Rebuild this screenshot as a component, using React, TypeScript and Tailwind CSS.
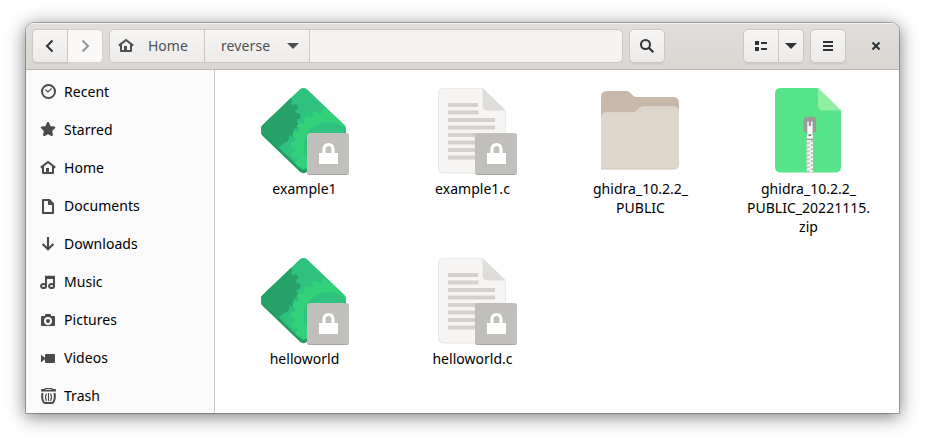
import React from "react";

type P = { children: React.ReactNode; className?: string };

function Sym({ children, className = "" }: P) {
  return (
    <svg width="16" height="16" viewBox="0 0 16 16" className={"shrink-0 " + className} fill="currentColor" stroke="none">
      {children}
    </svg>
  );
}

const homeShape = (
  <>
    <path d="M0.8 7.6 8 2 15.2 7.6" fill="none" stroke="currentColor" strokeWidth="2" />
    <path d="M2 7v6q0 1 1 1h10q1 0 1-1V7l-2-1.5V12H9V8H6v4H4V5.5z" />
  </>
);

const places: { name: string; icon: React.ReactNode }[] = [
  {
    name: "Recent",
    icon: (
      <>
        <circle cx="8.5" cy="7.5" r="6.5" fill="none" stroke="currentColor" strokeWidth="2" />
        <path d="M5.3 5.6 8 8 11.6 4.4" fill="none" stroke="currentColor" strokeWidth="1.2" />
      </>
    ),
  },
  {
    name: "Starred",
    icon: <path d="M8 1 9.9 5l4.400.6-3.200 3 .8 4.400L8 11l-3.900 2 .8-4.400-3.200-3L6.100 5z" stroke="currentColor" strokeWidth="2" strokeLinejoin="round" />,
  },
  { name: "Home", icon: homeShape },
  {
    name: "Documents",
    icon: <path d="M3 2h6.4L13 5.6V15H3zM9 2v4h4" fill="none" stroke="currentColor" strokeWidth="2" strokeLinejoin="round" />,
  },
  {
    name: "Downloads",
    icon: <path d="M8 1v12M2.600 8 8 13.300 13.400 8" fill="none" stroke="currentColor" strokeWidth="2.200" />,
  },
  {
    name: "Music",
    icon: (
      <>
        <path d="M5 1.700h10V12h-2V5H7v7H5z" />
        <ellipse cx="3.600" cy="12" rx="2.500" ry="2.100" fill="none" stroke="currentColor" strokeWidth="2" />
        <ellipse cx="11.600" cy="12" rx="2.500" ry="2.100" fill="none" stroke="currentColor" strokeWidth="2" />
      </>
    ),
  },
  {
    name: "Pictures",
    icon: (
      <>
        <path fillRule="evenodd" d="M2 4h3V3q0-1 1-1h4q1 0 1 1v1h3q1 0 1 1v8q0 1-1 1H2q-1 0-1-1V5q0-1 1-1zm6 1a4 4 0 1 0 0 8 4 4 0 0 0 0-8z" />
        <circle cx="8" cy="9" r="2" />
      </>
    ),
  },
  {
    name: "Videos",
    icon: <path d="M6 4h8q1 0 1 1v7q0 1-1 1H6q-1 0-1-1V5q0-1 1-1zM1 4.6 5 8v1l-4 3.4z" />,
  },
  {
    name: "Trash",
    icon: (
      <>
        <path d="M5 0h7l1 1h2q1 0 1 1v1.600H1V2q0-1 1-1h2zM5.400 1.200v.9h6v-.9z" fillRule="evenodd" />
        <path d="M2.600 5Q1.400 9 3.200 13.500 3.700 15 5.500 15h6q1.800 0 2.300-1.500Q15.600 9 14.400 5" fill="none" stroke="currentColor" strokeWidth="2" />
        <path d="M6.400 5.500q-1.800 3.700 0 7.500M10.600 5.500q1.800 3.700 0 7.500M8.500 5v8" fill="none" stroke="currentColor" strokeWidth="1.100" />
      </>
    ),
  },
];

function gear(cx: number, cy: number, r: number, h: number, teeth: number, phase: number) {
  const step = (Math.PI * 2) / teeth;
  const pts: string[] = [];
  for (let i = 0; i < teeth; i++) {
    const a = phase + i * step;
    const corners: [number, number][] = [
      [-0.3, r],
      [-0.2, r + h],
      [0.2, r + h],
      [0.3, r],
    ];
    corners.forEach(([o, d]) => {
      pts.push(`${(cx + Math.cos(a + o * step) * d).toFixed(2)},${(cy + Math.sin(a + o * step) * d).toFixed(2)}`);
    });
  }
  return pts.join(" ");
}

function Executable({ id }: { id: string }) {
  return (
    <svg width="96" height="96" viewBox="0 0 96 96">
      <defs>
        <clipPath id={id}>
          <rect x="-31.500" y="-31.500" width="63" height="63" rx="5" transform="translate(47.500 46.700) scale(1 .96) rotate(45)" />
        </clipPath>
        <clipPath id={id + "-tip"}>
          <path d="M42 80h12v14H42z" />
        </clipPath>
      </defs>
      <rect x="-31.500" y="-31.500" width="63" height="63" rx="5" transform="translate(47.500 50.400) scale(1 .96) rotate(45)" fill="#249a63" />
      <rect
        x="-31.500"
        y="-31.500"
        width="63"
        height="63"
        rx="5"
        transform="translate(47.500 50.400) scale(1 .96) rotate(45)"
        fill="#2bb777"
        clipPath={`url(#${id}-tip)`}
      />
      <g clipPath={`url(#${id})`}>
        <rect width="96" height="96" fill="#2ec27e" />
        <polygon points={gear(18, 36.500, 22.500, 3.600, 16, 0.300)} fill="#26a269" stroke="#26a269" strokeLinejoin="round" />
        <path d="M0 46 14 30 34 56 22 66z" fill="#26a269" />
        <polygon points={gear(72.300, 64.300, 33.300, 3.800, 22, 0.050)} fill="#33d17a" stroke="#33d17a" strokeLinejoin="round" />
        <circle cx="72.300" cy="64.300" r="24.300" fill="#2ec27e" />
      </g>
    </svg>
  );
}

function TextFile() {
  return (
    <svg width="96" height="96" viewBox="0 0 96 96">
      <path d="M20 6h38.500L82 28.500v57q0 6-6 6H20q-6 0-6-6V12q0-6 6-6z" fill="#e6e4e1" />
      <path d="M20 6.500h38.500L81.400 28.500V84.500q0 6-6 6H20.500q-5.700 0-5.700-6V12.500q0-6 5.700-6z" fill="#f6f5f4" />
      <path d="M58.500 6 81.600 28.500H64q-5.500 0-5.500-5.500z" fill="#deddda" />
      <path
        d="M24 21h30v4H24zM24 28.500h30.500v4H24zM24 36h47v4H24zM24 43.500h47v4H24zM24 51h47v4H24zM24 58.500h47v4H24zM24 66h47v4H24zM24 73.500h47v4H24z"
        fill="#d3d2cf"
      />
    </svg>
  );
}

function Folder() {
  return (
    <svg width="96" height="96" viewBox="0 0 96 96">
      <path d="M15 9h19.500q2 0 3.500 1.500l3 3q1.500 1.500 3.500 1.500H81q6 0 6 6v20H9V15q0-6 6-6z" fill="#c8b8a9" />
      <path d="M9 42V36q0-6 6-6h26q2 0 3.500-1.500l3-3Q49 24 51 24h30q6 0 6 6v51.500q0 6-6 6H9z" fill="#d1c6bb" />
      <path d="M9 36q0-5.700 6-5.700h26q2 0 3.500-1.500l3-3Q49 24.300 51 24.300h30q6 0 6 6v50.200q0 6-6 6H9z" fill="#ded5cb" />
    </svg>
  );
}

function Archive() {
  const teeth = [0, 1, 2, 3, 4, 5, 6, 7];
  return (
    <svg width="96" height="96" viewBox="0 0 96 96">
      <path d="M20.500 6H58L81 28.500V84.500q0 6-6 6H21q-6 0-6-6V12q0-6 5.500-6z" fill="#57e389" />
      <path d="M58 6 81 28.500H63.500q-5.500 0-5.500-5.500z" fill="#8ff0a4" />
      <rect x="46.700" y="56" width="6.300" height="34.500" fill="#c3c3bf" />
      {teeth.map((i) => (
        <path key={i} d={`M46.700 ${58.500 + i * 4}l4-.5v2l-4 .5zM49.500 ${60.500 + i * 4}l3.500-.5v2l-3.500.5z`} fill="#f6f5f4" />
      ))}
      <path d="M46 35h7.700q2.300 0 2.300 2.500V48q0 2.500-2.300 2.500H53V56q0 2-1.500 2h-3.300q-1.500 0-1.500-2v-5.500H46q-2.300 0-2.300-2.500V37.500Q43.700 35 46 35z" fill="#9a9996" />
      <path d="M47.300 39.500h1.500v4.500h2.300v-4.500h1.500V52l.4 3q0 1.800-1.500 1.800h-3.300q-1.500 0-1.500-1.800l.6-3z" fill="#fbfbfb" />
      <path d="M48.500 52.300h2.800v1.800h-2.800z" fill="#77767b" />
    </svg>
  );
}

function LockEmblem() {
  return (
    <span className="absolute bottom-[3px] right-[3px] h-[42px] w-[42px] rounded-[3px] border-b border-[#a5a39f] bg-[#c0bfbc]">
      <svg width="42" height="41" viewBox="0 0 42 41">
        <path d="M12 20h19v11H12z" fill="#fff" />
        <path d="M17 21v-4.500q0-5 4.500-5t4.500 5V21" fill="none" stroke="#fff" strokeWidth="3" />
      </svg>
    </span>
  );
}

function Item({ lines, locked, children }: { lines: string[]; locked?: boolean; children: React.ReactNode }) {
  return (
    <div className="flex h-[170px] w-[168px] flex-col items-center">
      <div className="relative h-24 w-24">
        {children}
        {locked && <LockEmblem />}
      </div>
      <div className="mt-px pl-px text-center leading-[19px] tracking-[0.02px] text-black">
        {lines.map((l) => (
          <div key={l}>{l}</div>
        ))}
      </div>
    </div>
  );
}

const button =
  "flex items-center justify-center border border-[#cdc7c2] bg-gradient-to-b from-[#f6f5f4] to-[#edebe9] shadow-[0_1px_1px_rgba(0,0,0,0.07),inset_0_1px_0_rgba(255,255,255,0.8)]";

export default function App() {
  return (
    <div className="h-[442px] w-[925px] overflow-hidden bg-white pl-[26px] pt-[23px] font-['Noto_Sans',sans-serif] text-[14px]">
      <div className="flex h-[390px] w-[873px] flex-col overflow-hidden rounded-t-[8px] shadow-[0_0_0_1px_rgba(0,0,0,0.25),0_3px_18px_1px_rgba(0,0,0,0.5)]">
        <header className="flex h-[47px] shrink-0 items-start border-b border-[#bfb8b1] bg-gradient-to-b from-[#e1dedb] to-[#dad6d2] pl-[6px] pt-[6px] text-[#2e3436] shadow-[inset_0_1px_0_#f5f4f2]">
          <div className="flex">
            <div className={button + " h-[34px] w-[36px] rounded-l-[5px]"}>
              <Sym>
                <path d="M10.500 2.500 5 8l5.500 5.500" fill="none" stroke="currentColor" strokeWidth="2" />
              </Sym>
            </div>
            <div className="flex h-[34px] w-[35px] items-center justify-center rounded-r-[5px] border border-l-0 border-[#d5d0cc] bg-[#faf9f8] text-[#929595]">
              <Sym>
                <path d="M5.500 2.500 11 8l-5.500 5.500" fill="none" stroke="currentColor" strokeWidth="2" />
              </Sym>
            </div>
          </div>
          <div className="ml-[6px] flex h-[34px] w-[514px] overflow-hidden rounded-[5px] border border-[#cdc7c2] bg-[#f5f4f2] text-[#4c5254]">
            <div className="flex w-[95px] items-center border-r border-[#cdc7c2] bg-gradient-to-b from-[#f6f5f4] to-[#edebe9] pl-2">
              <Sym>{homeShape}</Sym>
              <span className="ml-[14px] pb-[2px]">Home</span>
            </div>
            <div className="flex w-[105px] items-center border-r border-[#cdc7c2] bg-gradient-to-b from-[#f6f5f4] to-[#edebe9] pl-[16px]">
              <span className="w-[64px] pb-[2px] tracking-[0.1px]">reverse</span>
              <Sym>
                <path d="M2 5h12L8 11z" />
              </Sym>
            </div>
          </div>
          <div className={button + " ml-[6px] h-[34px] w-[36px] rounded-[5px]"}>
            <Sym>
              <circle cx="6.500" cy="6.500" r="4.500" fill="none" stroke="currentColor" strokeWidth="2" />
              <path d="M9.800 9.800 14.300 14.300" stroke="currentColor" strokeWidth="2.300" />
            </Sym>
          </div>
          <div className="ml-[78px] flex">
            <div className={button + " h-[34px] w-[36px] rounded-l-[5px]"}>
              <Sym>
                <path d="M2 3h4v4H2zM2 9h4v4H2zM8 4h6v2H8zM8 10h6v2H8z" />
              </Sym>
            </div>
            <div className={button + " h-[34px] w-[25px] rounded-r-[5px] border-l-0"}>
              <Sym>
                <path d="M2 5h12L8 11z" />
              </Sym>
            </div>
          </div>
          <div className={button + " ml-[6px] h-[34px] w-[36px] rounded-[5px]"}>
            <Sym>
              <path d="M3 3h10v2H3zM3 7h10v2H3zM3 11h10v2H3z" />
            </Sym>
          </div>
          <div className="ml-[22px] flex h-[34px] items-center">
            <Sym>
              <path d="M4.500 4.500l7 7M11.500 4.500l-7 7" stroke="currentColor" strokeWidth="2.200" />
            </Sym>
          </div>
        </header>
        <div className="flex min-h-0 flex-1 bg-white">
          <nav className="flex w-[189px] shrink-0 flex-col overflow-hidden border-r border-[#cdc7c2] bg-[#fafafa] pt-[3px]">
            {places.map((p) => (
              <div key={p.name} className="flex h-[38px] shrink-0 items-center pl-[14px] text-black">
                <Sym className="text-[#4a4a4a]">{p.icon}</Sym>
                <span className="ml-2 pb-[2px] tracking-[0.04px]">{p.name}</span>
              </div>
            ))}
          </nav>
          <main className="flex flex-1 flex-wrap content-start pl-[5px] pt-[12px]">
            <Item lines={["example1"]} locked>
              <Executable id="face-example" />
            </Item>
            <Item lines={["example1.c"]} locked>
              <TextFile />
            </Item>
            <Item lines={["ghidra_10.2.2_", "PUBLIC"]}>
              <Folder />
            </Item>
            <Item lines={["ghidra_10.2.2_", "PUBLIC_20221115.", "zip"]}>
              <Archive />
            </Item>
            <Item lines={["helloworld"]} locked>
              <Executable id="face-hello" />
            </Item>
            <Item lines={["helloworld.c"]} locked>
              <TextFile />
            </Item>
          </main>
        </div>
      </div>
    </div>
  );
}
